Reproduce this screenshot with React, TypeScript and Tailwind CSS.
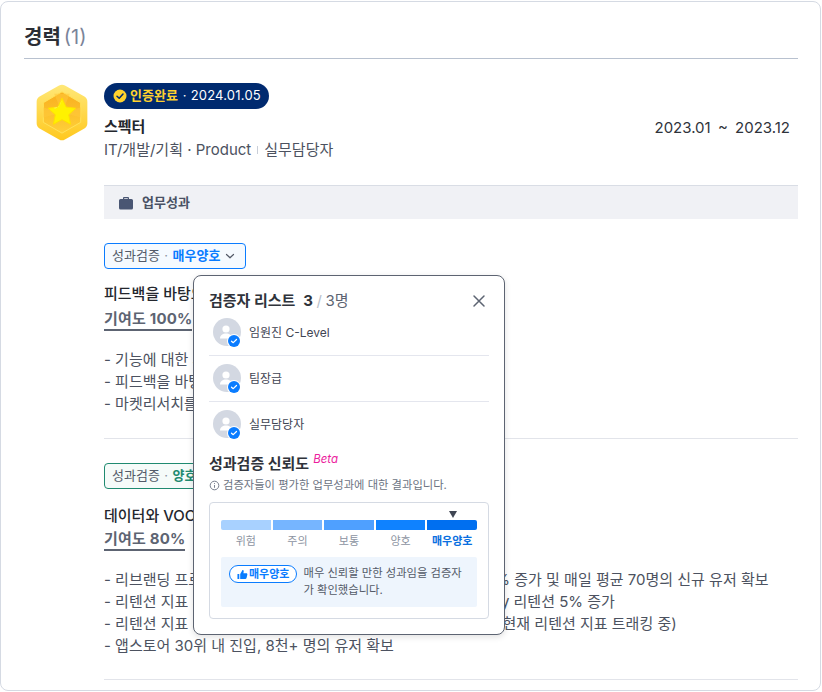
const font = "font-['Inter','Noto_Sans_CJK_KR',sans-serif]";

const CheckBadge = () => (
  <span className="absolute right-[1px] -bottom-[1px] flex h-[12px] w-[12px] items-center justify-center rounded-full bg-[#0a7cff] ring-1 ring-white">
    <svg viewBox="0 0 12 12" className="size-[10px]" fill="none">
      <path d="M3 6.2 5.1 8 9 4.2" stroke="#fff" strokeWidth="1.5" strokeLinecap="round" strokeLinejoin="round" />
    </svg>
  </span>
);

const Verifier = ({ name, last }: { name: string; last?: boolean }) => (
  <div className={`flex h-[46px] items-center gap-[8px] pl-[4px] ${last ? '' : 'border-b border-[#e4e6ee]'}`}>
    <div className="relative mb-[2px] h-[28px] w-[28px] rounded-full bg-[#d3d8e2]">
      <svg viewBox="0 0 28 28" className="size-[28px]" fill="#fff">
        <circle cx="13" cy="11" r="3.6" />
        <path d="M7 20.5c0-3.4 2.800-5 6-5s6 1.600 6 5z" />
      </svg>
      <CheckBadge />
    </div>
    <span className="text-[12px] text-[#3f4553]">{name}</span>
  </div>
);

const Medal = () => (
  <svg viewBox="0 0 52 58" className="h-[57px] w-[52px]">
    <defs>
      <linearGradient id="rim" x1="0" y1="0" x2="0" y2="1">
        <stop offset="0" stopColor="#ffe878" />
        <stop offset="1" stopColor="#ffc81e" />
      </linearGradient>
      <linearGradient id="face" x1="0" y1="0" x2="0" y2="1">
        <stop offset="0" stopColor="#f9ae1e" />
        <stop offset="1" stopColor="#ffd039" />
      </linearGradient>
    </defs>
    <path d="M23 1.600a6 6 0 0 1 6 0l19.800 11.200a6 6 0 0 1 3 5.200v22a6 6 0 0 1-3 5.200L29 56.400a6 6 0 0 1-6 0L3.200 45.200a6 6 0 0 1-3-5.200V18a6 6 0 0 1 3-5.200z" fill="url(#rim)" />
    <path d="M26 8 45 19v20L26 50 7 39V19z" fill="url(#face)" stroke="#ffe25a" strokeWidth="1" />
    <path d="M26 29 18 10h16zM26 29 7 24v10zM26 29l19-5v10z" fill="#ffc93d" opacity=".55" />
    <path d="M26 14.500 30.200 23.500 40 24.700 32.800 31.300 34.700 41 26 36.200 17.300 41 19.200 31.300 12 24.700 21.800 23.500z" fill="#fff200" stroke="#ffe000" strokeWidth="1" strokeLinejoin="round" />
    <path d="M17 24.500c4 .8 7-1.500 8.500-7.500l-2.700 6.300z" fill="#ffef9a" />
  </svg>
);

const Pill = ({ border, bg, color, label, open }: { border: string; bg: string; color: string; label: string; open?: boolean }) => (
  <div className={`flex h-[26px] w-fit items-center rounded-[4px] border pl-[7px] pr-[10px] text-[13px] ${border} ${bg}`}>
    <span className="text-[#535a68]">성과검증</span>
    <span className="mx-[4.500px] text-[#8a91a0]">·</span>
    <span className={`font-bold ${color}`}>{label}</span>
    {open && (
      <svg viewBox="0 0 10 10" className="ml-[5px] size-[10px]" fill="none">
        <path d="M1.500 3.500 5 6.800l3.500-3.300" stroke="#535a68" strokeWidth="1.200" strokeLinecap="round" strokeLinejoin="round" />
      </svg>
    )}
  </div>
);

export default function App() {
  const bars = ['bg-[#a8d1ff]', 'bg-[#76b5ff]', 'bg-[#4fa0ff]', 'bg-[#0f82ff]', 'bg-[#006ff0]'];
  const labels = ['위험', '주의', '보통', '양호', '매우양호'];

  return (
    <div className={`${font} h-[692px] w-[822px] overflow-hidden bg-white pt-[1px]`}>
      <div className="relative h-[690px] w-[821px] rounded-[8px] border border-[#d5dae3] pl-[23px] pr-[22px]">
        <div className="flex h-[57px] items-center border-b border-[#b8c1cf] pt-[14px] text-[20px] leading-[24px]">
          <span className="font-bold text-[#2b2e35]">경력</span>
          <span className="ml-[3px] text-[#7a8499]">(1)</span>
        </div>

        <div className="flex pt-[24px]">
          <div className="w-[80px] pl-[12px] pt-[1px]">
            <Medal />
          </div>
          <div className="min-w-0 flex-1">
            <div className="flex items-start justify-between pr-[8px]">
              <div>
                <div className="flex h-[26px] w-fit items-center rounded-full bg-[#002a6f] pl-[9px] pr-[8px] text-[13px]">
                  <svg viewBox="0 0 14 14" className="size-[14px]">
                    <circle cx="7" cy="7" r="6.500" fill="#ffd22e" />
                    <path d="M4 7.200 6.200 9.300 10 5" fill="none" stroke="#002a6f" strokeWidth="1.500" strokeLinecap="round" strokeLinejoin="round" />
                  </svg>
                  <span className="ml-[3px] font-bold text-[#ffd22e]">인증완료</span>
                  <span className="ml-[5px] tracking-[0.2px] text-white">· 2024.01.05</span>
                </div>
                <p className="mt-[7px] text-[15px] font-bold leading-[22px] text-[#24272e]">스펙터</p>
                <p className="mt-[1px] flex items-center text-[15px] leading-[22px] text-[#4c5260]">
                  IT/개발/기획 · Product
                  <span className="mx-[6px] h-[8px] w-[1px] bg-[#c9ced8]" />
                  실무담당자
                </p>
              </div>
              <span className="mt-[34px] text-[15px] leading-[22px] text-[#2f333b] [word-spacing:3px]">2023.01 ~ 2023.12</span>
            </div>

            <div className="mt-[24px] flex h-[34px] items-center gap-[9px] border-t border-[#d9dde5] bg-[#f0f1f5] pl-[15px] text-[13px] font-bold text-[#4a5164]">
              <svg viewBox="0 0 14 14" className="size-[14px]" fill="#4a5673">
                <path d="M5 1h4a1 1 0 0 1 1 1v1h2.500A1.500 1.500 0 0 1 14 4.500V12a1.500 1.500 0 0 1-1.500 1.500h-11A1.500 1.500 0 0 1 0 12V4.500A1.500 1.500 0 0 1 1.500 3H4V2a1 1 0 0 1 1-1zm.2 1.200V3h3.600v-.8z" fillRule="evenodd" />
              </svg>
              업무성과
            </div>

            <div className="pt-[24px]">
              <Pill border="border-[#0a7cff]" bg="bg-[#f5faff]" color="text-[#0a7cff]" label="매우양호" open />
              <p className="mt-[14px] text-[15px] font-medium leading-[22px] text-[#24272e]">피드백을 바탕으로 제품 개선 및 신규 기능 기획</p>
              <p className="mt-[4px] w-fit border-b-2 border-[#5d6472] text-[15px] font-bold leading-[20px] tracking-[0.2px] text-[#5d6472]">기여도 100%</p>
              <div className="mt-[18px] text-[15px] leading-[22px] text-[#4c5260]">
                <p>- 기능에 대한 사용자 인터뷰 진행</p>
                <p>- 피드백을 바탕으로 화면 개선</p>
                <p>- 마켓리서치를 통한 신규 기능 기획</p>
              </div>
            </div>

            <div className="mt-[23px] border-t border-[#e2e4ea] pt-[24px]">
              <Pill border="border-[#1f8a70]" bg="bg-[#f5fbf9]" color="text-[#1f8a70]" label="양호" open />
              <p className="mt-[16px] text-[15px] font-medium leading-[22px] text-[#24272e]">데이터와 VOC를 기반으로 한 서비스 리브랜딩</p>
              <p className="mt-[2px] w-fit border-b-2 border-[#5d6472] text-[15px] font-bold leading-[20px] tracking-[0.2px] text-[#5d6472]">기여도 80%</p>
              <div className="mt-[18px] text-[15px] leading-[22px] text-[#4c5260]">
                <p>- 리브랜딩 프로젝트 진행으로, 앱 다운로드 수와 가입자 수 120% 증가 및 매일 평균 70명의 신규 유저 확보</p>
                <p>- 리텐션 지표 개선을 위한 신규 사용자 앱 온보딩 개선으로 1-day 리텐션 5% 증가</p>
                <p>- 리텐션 지표 개선을 위한 앱, 마케팅 푸시 알림 및 이벤트 기획 (현재 리텐션 지표 트래킹 중)</p>
                <p>- 앱스토어 30위 내 진입, 8천+ 명의 유저 확보</p>
              </div>
            </div>

            <div className="mt-[22px] border-t border-[#e2e4ea]" />
          </div>
        </div>

        <div className="absolute left-[192px] top-[273px] w-[312px] rounded-[8px] border border-[#5d6472] bg-white p-[15px] shadow-[0_2px_6px_rgba(0,0,0,0.12)]">
          <div className="flex items-center justify-between">
            <p className="text-[15px] leading-[20px] text-[#2f333b]">
              <span className="font-bold">검증자 리스트</span>
              <span className="ml-[8px] font-bold">3</span>
              <span className="mx-[3.500px] text-[#b9bfca]">/</span>
              <span className="text-[#5d6472]">3명</span>
            </p>
            <svg viewBox="0 0 14 14" className="mr-[3px] size-[14px]" fill="none">
              <path d="M2 2l10 10M12 2 2 12" stroke="#5d6472" strokeWidth="1.500" strokeLinecap="round" />
            </svg>
          </div>
          <div className="-mt-[1px]">
            <Verifier name="임원진 C-Level" />
            <Verifier name="팀장급" />
            <Verifier name="실무담당자" last />
          </div>

          <p className="mt-[6px] flex items-start text-[15px] font-bold leading-[20px] text-[#2f333b]">
            성과검증 신뢰도
            <span className="ml-[4px] -mt-[2px] text-[11.500px] font-normal italic leading-[14px] text-[#ec1e9e]">Beta</span>
          </p>
          <div className="mt-[3px] flex items-center gap-[3px] text-[11.3px] leading-[16px] text-[#6c7382]">
            <svg viewBox="0 0 12 12" className="size-[11px]" fill="none" stroke="#6c7382">
              <circle cx="6" cy="6" r="4.700" />
              <path d="M6 5.500v3M6 3.400v1" />
            </svg>
            검증자들이 평가한 업무성과에 대한 결과입니다.
          </div>

          <div className="mt-[9px] rounded-[4px] border border-[#d5dae3] px-[11px] pb-[11px] pt-[8px]">
            <div className="flex justify-end pr-[20px]">
              <span className="h-0 w-0 border-x-[4px] border-t-[7px] border-x-transparent border-t-[#3f4553]" />
            </div>
            <div className="mt-[2px] grid grid-cols-5 gap-[2px]">
              {bars.map((b, i) => (
                <div
                  key={b}
                  className={`h-[10px] ${b} ${i === 0 ? 'rounded-l-[2px]' : ''} ${i === 4 ? 'rounded-r-[2px]' : ''}`}
                />
              ))}
            </div>
            <div className="mt-[2px] grid grid-cols-5 gap-[2px] text-center text-[11px] leading-[18px] text-[#8c93a1]">
              {labels.map((l, i) => (
                <span key={l} className={i === 4 ? 'font-bold text-[#0a6fe0]' : ''}>{l}</span>
              ))}
            </div>
            <div className="mt-[7px] flex items-start gap-[6px] rounded-[2px] bg-[#eef5fd] py-[8px] pl-[8px] pr-[10px]">
              <div className="flex h-[18px] shrink-0 items-center gap-[1px] rounded-full border border-[#0a7cff] bg-white px-[7px] text-[11px] font-bold text-[#0a7cff]">
                <svg viewBox="0 0 12 12" className="size-[11px]" fill="#0a7cff">
                  <path d="M0.500 5.500h2v5.500h-2zM3.500 5.500 6 1.200c1 0 1.500.7 1.300 1.600L7 4.500h3.200c.8 0 1.300.7 1.100 1.500l-.9 3.900c-.2.700-.7 1.100-1.400 1.100H3.500z" />
                </svg>
                매우양호
              </div>
              <p className="text-[11.3px] leading-[17px] text-[#535a68]">매우 신뢰할 만한 성과임을 검증자가 확인했습니다.</p>
            </div>
          </div>
        </div>
      </div>
    </div>
  );
}
